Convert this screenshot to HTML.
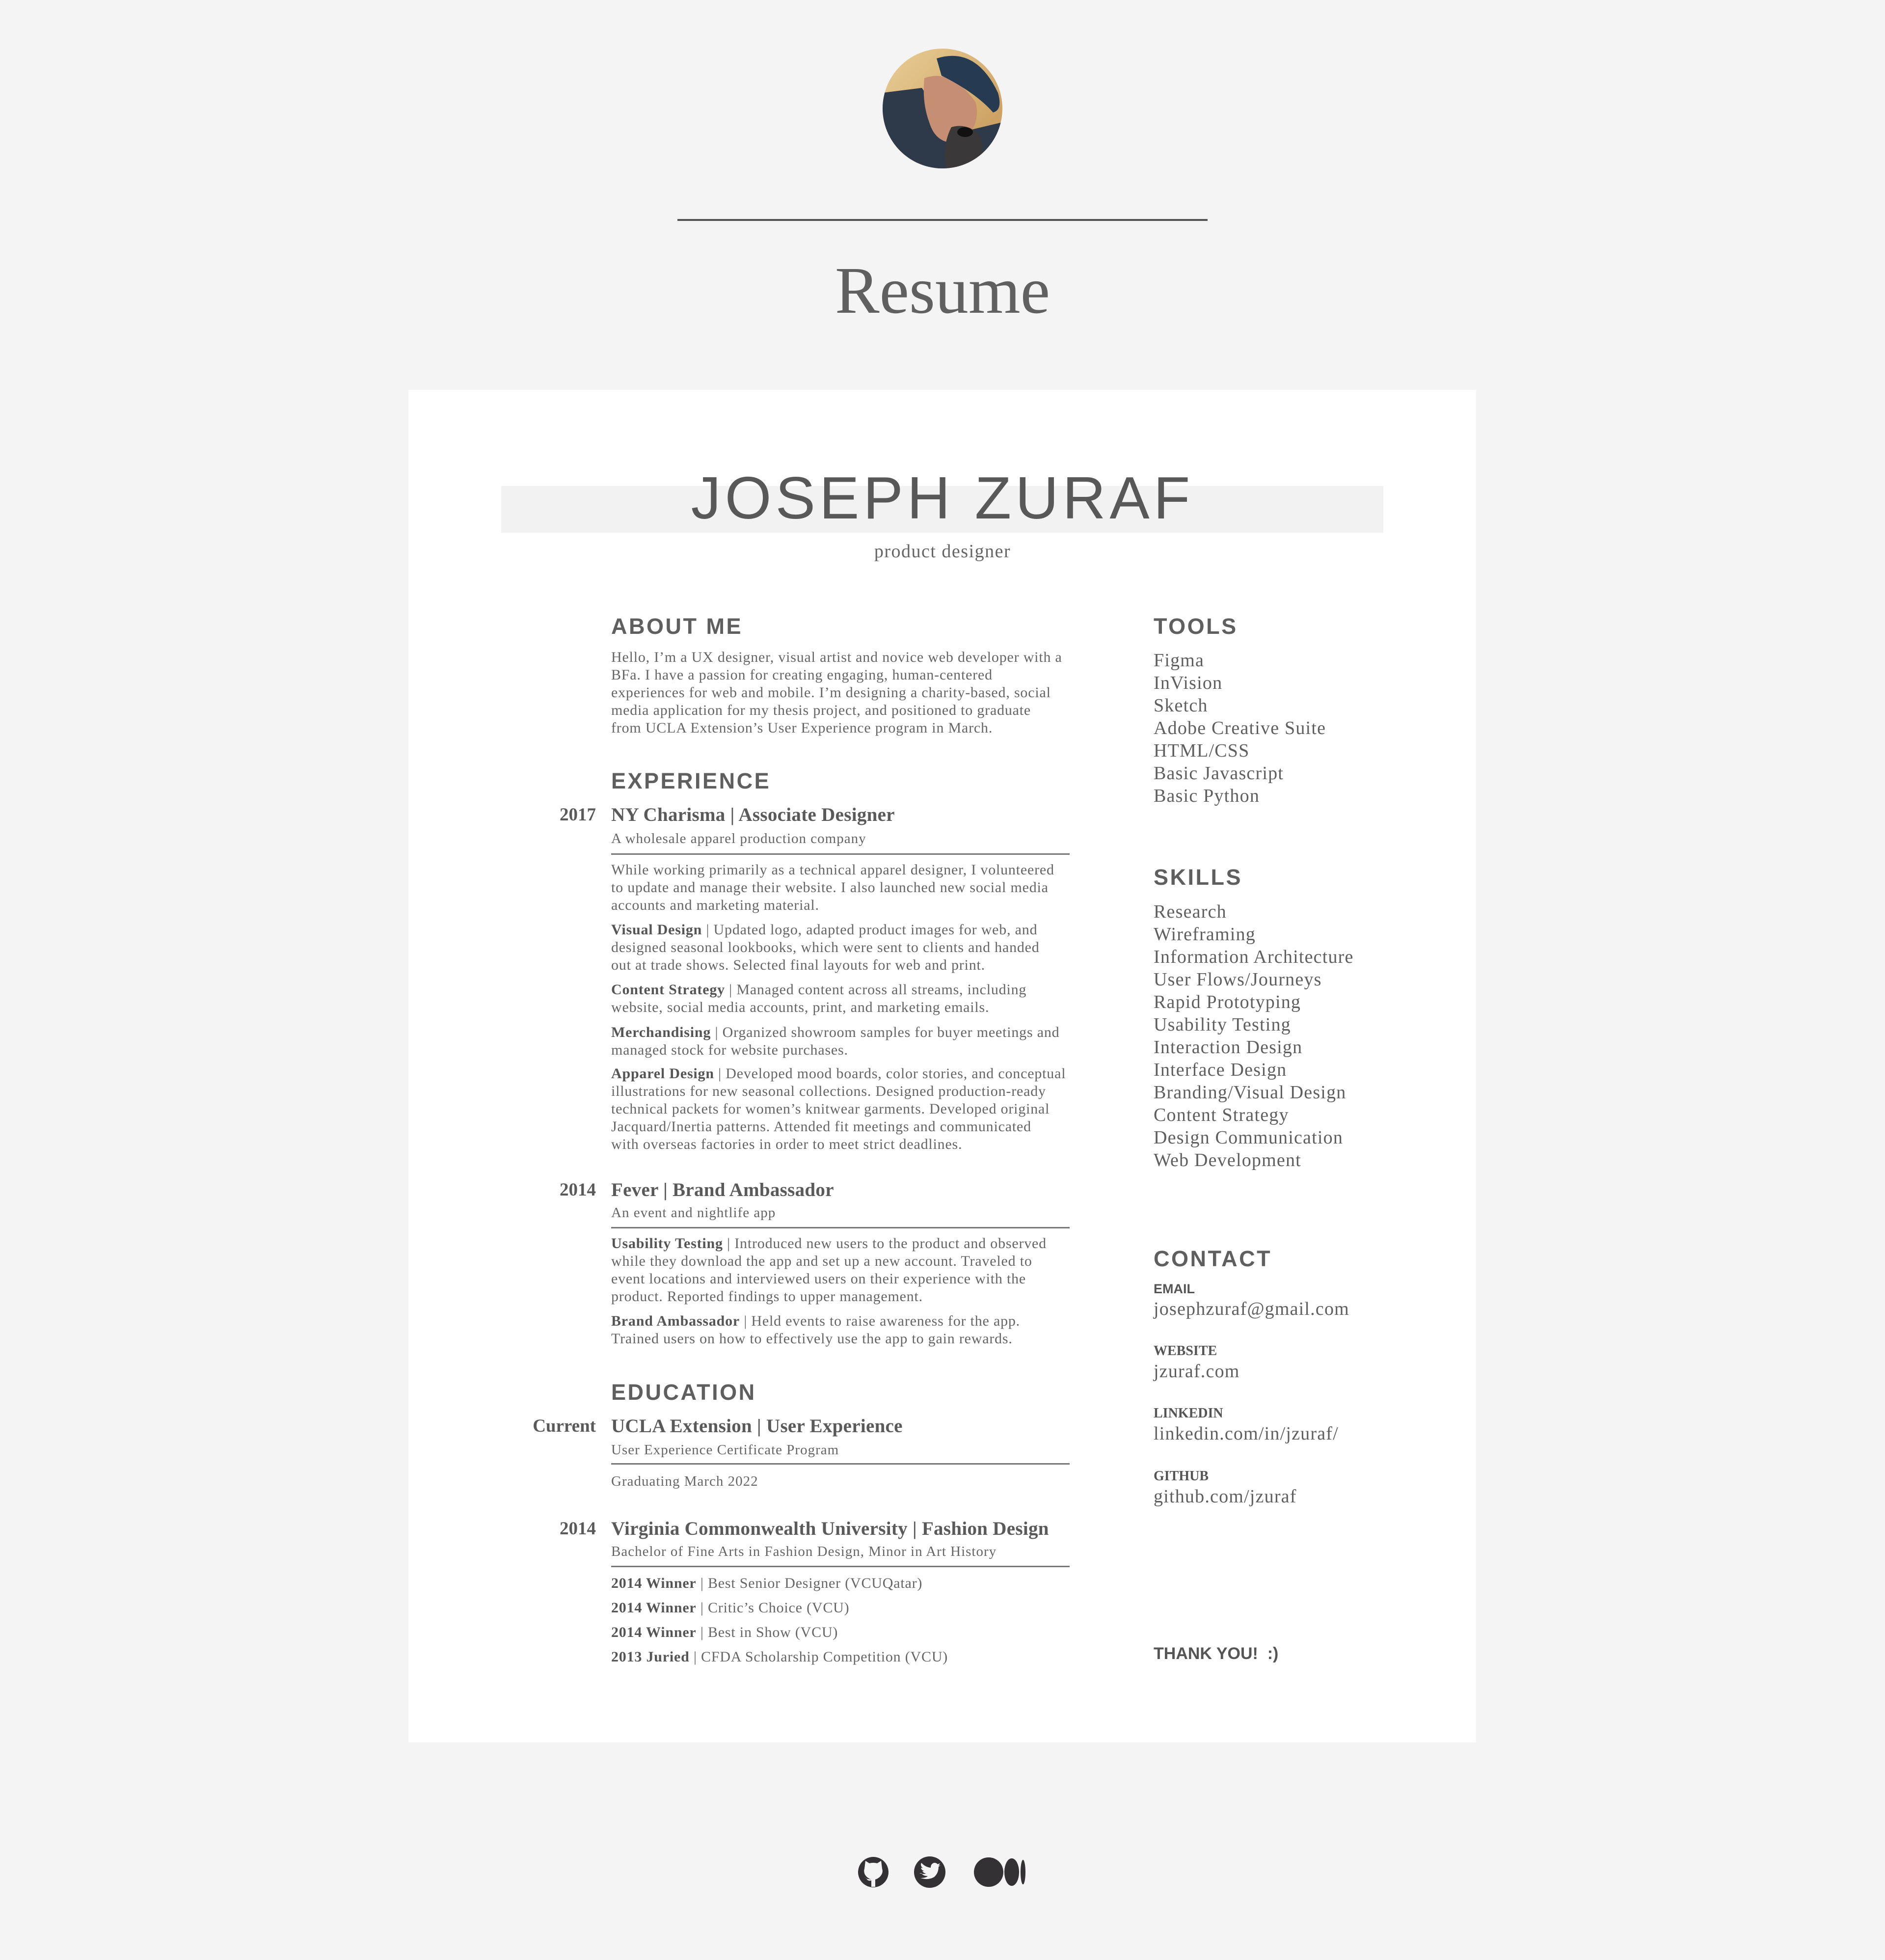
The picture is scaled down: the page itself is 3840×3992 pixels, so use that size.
<!DOCTYPE html>
<html><head><meta charset="utf-8"><style>
html,body{margin:0;padding:0}
body{width:3840px;height:3992px;background:#f4f4f4;position:relative;overflow:hidden;color:#5f5f5f;font-family:"Liberation Serif",serif}
.t{position:absolute;white-space:nowrap}
.card{position:absolute;left:832px;top:794px;width:2175px;height:2755px;background:#fff}
.h{font-family:"Liberation Sans",sans-serif;font-weight:bold;font-size:45px;letter-spacing:3.5px;line-height:60px;color:#5f5f5f}
.p{font-size:30px;line-height:36px;letter-spacing:0.8px;color:#666}
.p b{color:#555}
.ti{font-size:39px;font-weight:bold;line-height:50px;letter-spacing:0.3px;color:#5a5a5a}
.yr{font-size:37px;font-weight:bold;line-height:50px;color:#5a5a5a;text-align:right;width:300px}
.sub{font-size:29px;line-height:40px;letter-spacing:1px;color:#666}
.rule{position:absolute;left:1245px;width:934px;height:3px;background:#777}
.list{font-size:38px;line-height:46px;letter-spacing:1.2px;color:#5f5f5f}
.lab{font-family:"Liberation Sans",sans-serif;font-weight:bold;font-size:27px;line-height:36px;color:#555}
.lab2{font-weight:bold;font-size:28px;line-height:36px;color:#555}
.val{font-size:38px;line-height:46px;letter-spacing:1.2px;color:#5f5f5f}
</style></head><body>
<svg class="t" style="left:1798px;top:99px" width="244" height="244" viewBox="0 0 244 244">
<defs><clipPath id="c"><circle cx="122" cy="122" r="122"/></clipPath>
<linearGradient id="bg" x1="0" y1="0" x2="1" y2="1"><stop offset="0" stop-color="#e9cf96"/><stop offset="1" stop-color="#c69456"/></linearGradient></defs>
<g clip-path="url(#c)">
<rect width="244" height="244" fill="url(#bg)"/>
<path d="M0 90 L80 80 L120 140 L160 170 L244 150 L244 244 L0 244Z" fill="#2e3a4a"/>
<path d="M85 60 Q140 40 190 110 Q200 160 160 190 Q110 200 95 150 Q80 110 85 60Z" fill="#c68e72"/>
<path d="M110 20 Q190 -5 235 90 Q245 125 225 130 Q190 90 120 55Z" fill="#263a52"/>
<path d="M140 160 Q175 150 200 180 L210 244 L130 244 Q120 200 140 160Z" fill="#3a3838"/>
<ellipse cx="168" cy="170" rx="16" ry="10" fill="#111"/>
</g></svg>
<div class="t" style="left:1380px;top:446px;width:1080px;height:4px;background:#555"></div>
<div class="t" style="left:0;width:3840px;text-align:center;top:510px;font-size:136px;line-height:164px;color:#606060">Resume</div>

<div class="card"></div>
<div class="t" style="left:1021px;top:990px;width:1797px;height:95px;background:#f2f2f2"></div>
<div class="t" style="left:0;width:3840px;text-align:center;top:942px;font-family:'Liberation Sans',sans-serif;font-size:122px;line-height:144px;letter-spacing:8px;color:#585858">JOSEPH ZURAF</div>
<div class="t" style="left:0;width:3840px;text-align:center;top:1100px;font-size:38px;line-height:46px;letter-spacing:1.5px;color:#666">product designer</div>

<div class="t h" style="left:1245px;top:1246px">ABOUT ME</div>
<div class="t p" style="left:1245px;top:1321px">Hello, I’m a UX designer, visual artist and novice web developer with a<br>BFa. I have a passion for creating engaging, human-centered<br>experiences for web and mobile. I’m designing a charity-based, social<br>media application for my thesis project, and positioned to graduate<br>from UCLA Extension’s User Experience program in March.</div>

<div class="t h" style="left:1245px;top:1561px">EXPERIENCE</div>
<div class="t yr" style="left:914px;top:1635px">2017</div>
<div class="t ti" style="left:1245px;top:1635px">NY Charisma | Associate Designer</div>
<div class="t sub" style="left:1245px;top:1688px">A wholesale apparel production company</div>
<div class="rule" style="top:1738px"></div>
<div class="t p" style="left:1245px;top:1754px">While working primarily as a technical apparel designer, I volunteered<br>to update and manage their website. I also launched new social media<br>accounts and marketing material.</div>
<div class="t p" style="left:1245px;top:1876px"><b>Visual Design</b> | Updated logo, adapted product images for web, and<br>designed seasonal lookbooks, which were sent to clients and handed<br>out at trade shows. Selected final layouts for web and print.</div>
<div class="t p" style="left:1245px;top:1998px"><b>Content Strategy</b> | Managed content across all streams, including<br>website, social media accounts, print, and marketing emails.</div>
<div class="t p" style="left:1245px;top:2085px"><b>Merchandising</b> | Organized showroom samples for buyer meetings and<br>managed stock for website purchases.</div>
<div class="t p" style="left:1245px;top:2169px"><b>Apparel Design</b> | Developed mood boards, color stories, and conceptual<br>illustrations for new seasonal  collections. Designed production-ready<br>technical packets for women’s knitwear garments. Developed original<br>Jacquard/Inertia patterns. Attended fit meetings and communicated<br>with overseas factories in order to meet strict deadlines.</div>

<div class="t yr" style="left:914px;top:2399px">2014</div>
<div class="t ti" style="left:1245px;top:2399px">Fever | Brand Ambassador</div>
<div class="t sub" style="left:1245px;top:2450px">An event and nightlife app</div>
<div class="rule" style="top:2499px"></div>
<div class="t p" style="left:1245px;top:2515px"><b>Usability Testing</b> | Introduced new users to the product and observed<br>while they download the app and set up a new account. Traveled to<br>event locations and interviewed users on their experience with the<br>product. Reported findings to upper management.</div>
<div class="t p" style="left:1245px;top:2673px"><b>Brand Ambassador</b> | Held events to raise awareness for the app.<br>Trained users on how to effectively use the app to gain rewards.</div>

<div class="t h" style="left:1245px;top:2806px">EDUCATION</div>
<div class="t yr" style="left:914px;top:2880px">Current</div>
<div class="t ti" style="left:1245px;top:2880px">UCLA Extension | User Experience</div>
<div class="t sub" style="left:1245px;top:2933px">User Experience Certificate Program</div>
<div class="rule" style="top:2980px"></div>
<div class="t sub" style="left:1245px;top:2997px">Graduating March 2022</div>
<div class="t yr" style="left:914px;top:3089px">2014</div>
<div class="t ti" style="left:1245px;top:3089px">Virginia Commonwealth University | Fashion Design</div>
<div class="t sub" style="left:1245px;top:3140px">Bachelor of Fine Arts in Fashion Design, Minor in Art History</div>
<div class="rule" style="top:3189px"></div>
<div class="t p" style="left:1245px;top:3200px;line-height:50px"><b>2014 Winner</b> | Best Senior Designer (VCUQatar)<br><b>2014 Winner</b> | Critic’s Choice (VCU)<br><b>2014 Winner</b> | Best in Show (VCU)<br><b>2013 Juried</b> | CFDA Scholarship Competition (VCU)</div>

<div class="t h" style="left:2350px;top:1246px">TOOLS</div>
<div class="t list" style="left:2350px;top:1322px">Figma<br>InVision<br>Sketch<br>Adobe Creative Suite<br>HTML/CSS<br>Basic Javascript<br>Basic Python</div>
<div class="t h" style="left:2350px;top:1757px">SKILLS</div>
<div class="t list" style="left:2350px;top:1834px">Research<br>Wireframing<br>Information Architecture<br>User Flows/Journeys<br>Rapid Prototyping<br>Usability Testing<br>Interaction Design<br>Interface Design<br>Branding/Visual Design<br>Content Strategy<br>Design Communication<br>Web Development</div>
<div class="t h" style="left:2350px;top:2534px">CONTACT</div>
<div class="t lab" style="left:2350px;top:2607px">EMAIL</div>
<div class="t val" style="left:2350px;top:2643px">josephzuraf@gmail.com</div>
<div class="t lab2" style="left:2350px;top:2734px">WEBSITE</div>
<div class="t val" style="left:2350px;top:2770px">jzuraf.com</div>
<div class="t lab2" style="left:2350px;top:2861px">LINKEDIN</div>
<div class="t val" style="left:2350px;top:2897px">linkedin.com/in/jzuraf/</div>
<div class="t lab2" style="left:2350px;top:2989px">GITHUB</div>
<div class="t val" style="left:2350px;top:3025px">github.com/jzuraf</div>
<div class="t" style="left:2350px;top:3348px;font-family:'Liberation Sans',sans-serif;font-weight:bold;font-size:34px;line-height:40px;color:#555">THANK YOU!&nbsp; :)</div>

<svg class="t" style="left:1740px;top:3770px" width="380" height="90" viewBox="0 0 380 90">
<g fill="#333133">
<circle cx="39" cy="43" r="31"/>
<circle cx="154" cy="43" r="32"/>
<circle cx="274" cy="43" r="30"/>
<ellipse cx="321" cy="43" rx="15" ry="28"/>
<ellipse cx="344" cy="43" rx="5" ry="25"/>
</g>
<path fill="#f4f4f4" d="M21 36 L23 20 L31 25 Q39 23 47 25 L55 20 L57 36 Q60 45 52 53 Q47 57 43 58 L43 73 L35 73 L35 60 Q28 62 25 56 L20 53 Q24 55 27 57 L35 58 Q26 55 22 48 Q19 42 21 36Z"/>
<path fill="#f4f4f4" d="M133 45 Q140 48 147 46 Q141 45 139 41 L143 41 Q137 39 136 34 L140 35 Q134 30 137 24 Q145 33 156 34 Q156 26 163 24 Q168 24 170 27 L175 25 L172 30 L176 29 L172 32 Q172 45 163 53 Q151 60 135 55 Q146 55 150 51 Q140 51 137 45Z"/>
</svg>
</body></html>
